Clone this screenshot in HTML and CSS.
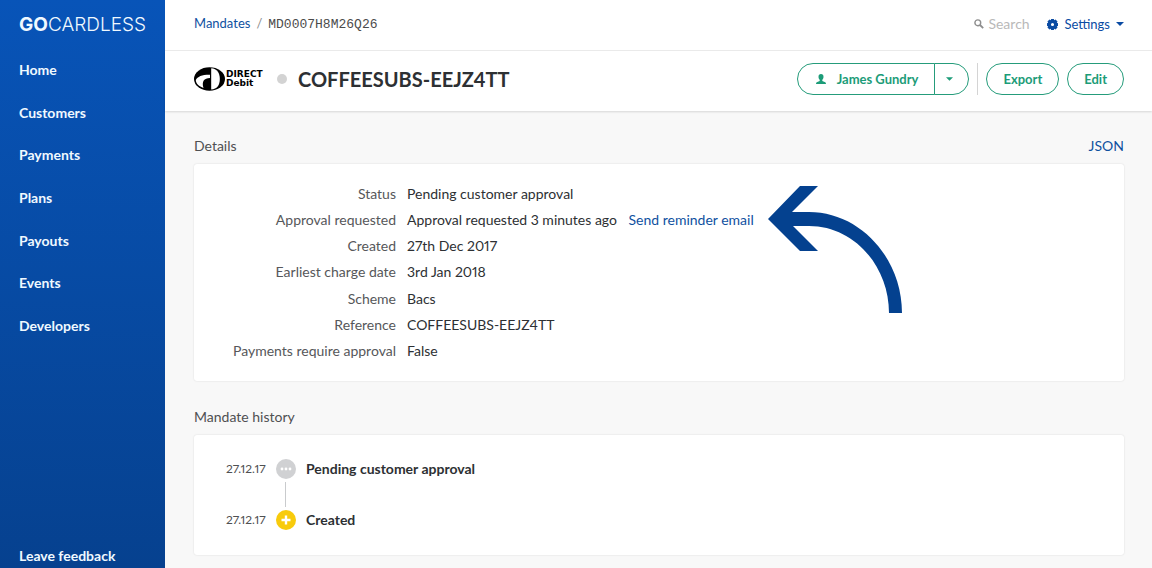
FILE: index.html
```html
<!DOCTYPE html>
<html lang="en">
<head>
<meta charset="utf-8">
<meta name="viewport" content="width=device-width, initial-scale=1">
<title>Mandate COFFEESUBS-EEJZ4TT</title>
<link rel="stylesheet" href="styles.css">
</head>
<body>
<div class="app">
  <aside class="sidebar">
    <a class="logo" href="#"><b>GO</b>CARDLESS</a>
    <nav class="nav">
      <a href="#">Home</a>
      <a href="#">Customers</a>
      <a href="#">Payments</a>
      <a href="#">Plans</a>
      <a href="#">Payouts</a>
      <a href="#">Events</a>
      <a href="#">Developers</a>
    </nav>
    <a class="feedback" href="#">Leave feedback</a>
  </aside>

  <div class="page">
    <header class="topbar">
      <div class="crumbs"><a href="#">Mandates</a><span class="slash">/</span><span class="mandate-id">MD0007H8M26Q26</span></div>
      <label class="search">
        <svg width="10" height="10" viewBox="0 0 10 10" aria-hidden="true"><circle cx="3.8" cy="3.8" r="2.9" fill="none" stroke="#8e8e8e" stroke-width="1.4"/><path d="M6 6l3.2 3.2" stroke="#8e8e8e" stroke-width="1.8"/></svg>
        <input type="search" placeholder="Search" aria-label="Search">
      </label>
      <button class="settings" type="button">
        <svg width="11" height="11" viewBox="0 0 12 12" aria-hidden="true"><path fill="#0a4ba3" fill-rule="evenodd" d="M4.5 0h3l.3 1.300L9.300.5l2.200 2.200-.8 1.500 1.300.3v3l-1.300.3.8 1.500-2.200 2.200-1.500-.8-.3 1.300h-3l-.3-1.300-1.500.8L.5 9.300l.8-1.500L0 7.500v-3l1.300-.3L.5 2.700 2.700.5l1.500.8zM6 4.300a1.700 1.700 0 1 0 0 3.400 1.700 1.700 0 0 0 0-3.400z"/></svg>
        <span>Settings</span>
        <svg class="caret" width="8" height="4" viewBox="0 0 8 4" aria-hidden="true"><path d="M0 0h8L4 4z" fill="currentColor"/></svg>
      </button>
    </header>

    <div class="titlebar">
      <div class="dd-logo">
        <svg width="31" height="24" viewBox="0 0 31 24" aria-hidden="true">
          <ellipse cx="15.500" cy="12" rx="15.500" ry="11.800" fill="#000"/>
          <path fill="#fff" d="M17.200 1.300C23 1.500 25.800 6 25.800 12S23 22.300 17.200 22.500z"/>
          <path fill="#fff" d="M1.800 13C3.500 9.500 8 7.600 16 7.700V11C10 11 7.500 14.500 9.500 21C5 19.500 1.800 16.500 1.800 13z"/>
        </svg>
        <div class="dd-text"><span>DIRECT</span><span>Debit</span></div>
      </div>
      <span class="status-dot"></span>
      <h1>COFFEESUBS-EEJZ4TT</h1>
      <div class="actions">
        <div class="split">
          <button type="button" class="who">
            <svg width="10" height="10" viewBox="0 0 10 10" aria-hidden="true"><path fill="currentColor" d="M5 0C6.600 0 7.500 1.100 7.500 2.700 7.500 4.100 7 5.100 6.300 5.700V7L9.300 8.200Q10 8.600 10 10H0Q0 8.600.7 8.200L3.700 7V5.700C3 5.100 2.500 4.100 2.500 2.700 2.500 1.100 3.400 0 5 0z"/></svg>
            <span>James Gundry</span>
          </button>
          <button type="button" class="more" aria-label="More customers"><svg width="7" height="4" viewBox="0 0 8 4" aria-hidden="true"><path d="M0 0h8L4 4z" fill="currentColor"/></svg></button>
        </div>
        <span class="divider"></span>
        <button type="button" class="pill">Export</button>
        <button type="button" class="pill">Edit</button>
      </div>
    </div>

    <main class="content">
      <section>
        <div class="section-head"><h2>Details</h2><a href="#">JSON</a></div>
        <div class="card details">
          <dl>
            <dt>Status</dt><dd>Pending customer approval</dd>
            <dt>Approval requested</dt><dd>Approval requested 3 minutes ago <a href="#">Send reminder email</a></dd>
            <dt>Created</dt><dd>27th Dec 2017</dd>
            <dt>Earliest charge date</dt><dd>3rd Jan 2018</dd>
            <dt>Scheme</dt><dd>Bacs</dd>
            <dt>Reference</dt><dd>COFFEESUBS-EEJZ4TT</dd>
            <dt>Payments require approval</dt><dd>False</dd>
          </dl>
          <svg class="arrow" width="135" height="127" viewBox="0 0 135 127" aria-hidden="true"><path fill="#04418f" d="M0 33L32 0H50L24 26H41C92 26 134 72 134 127H121C121 80 86 40 41 40H25L50 65H32z"/></svg>
        </div>
      </section>

      <section>
        <div class="section-head"><h2>Mandate history</h2></div>
        <ol class="card history">
          <li>
            <time>27.12.17</time>
            <svg width="20" height="20" viewBox="0 0 20 20" aria-hidden="true"><circle cx="10" cy="10" r="10" fill="#d0d1d3"/><g fill="#fff"><circle cx="6" cy="10" r="1.400"/><circle cx="10" cy="10" r="1.400"/><circle cx="14" cy="10" r="1.400"/></g></svg>
            <strong>Pending customer approval</strong>
          </li>
          <li class="link-line" aria-hidden="true"></li>
          <li>
            <time>27.12.17</time>
            <svg width="20" height="20" viewBox="0 0 20 20" aria-hidden="true"><circle cx="10" cy="10" r="10" fill="#f8cb0c"/><path d="M10 5.500v9M5.500 10h9" stroke="#fff" stroke-width="2.400"/></svg>
            <strong>Created</strong>
          </li>
        </ol>
      </section>
    </main>
  </div>
</div>
</body>
</html>
```
FILE: styles.css
```css
* { box-sizing: border-box; }
body {
  margin: 0;
  background: #f8f8f8;
  color: #2d3033;
  font: 14px/20px Lato, "Liberation Sans", sans-serif;
}
a { color: #0f519f; text-decoration: none; }
button { font: inherit; cursor: pointer; }
.app { display: flex; min-height: 100vh; }

.sidebar {
  display: flex;
  flex-direction: column;
  flex: 0 0 165px;
  padding: 15px 19px 2px;
  background: linear-gradient(#0854b8, #06418f);
}
.sidebar a { color: #f0f9ff; font-weight: 700; }
.sidebar .logo { font-family: Inter, sans-serif; font-size: 19px; font-weight: 300; }
.logo b { font-weight: 700; }
.nav {
  display: flex;
  flex-direction: column;
  justify-content: space-between;
  min-height: 276px;
  margin-top: 25px;
}
.feedback { margin-top: auto; }

.page { flex: 1; min-width: 0; }
.topbar {
  display: flex;
  align-items: center;
  height: 51px;
  padding: 0 28px 2px 29px;
  background: #fff;
  border-bottom: 1px solid #ececec;
}
.crumbs { display: flex; align-items: baseline; margin-right: auto; font-size: 13px; }
.slash { margin: 0 6px; color: #8b8b8b; }
.mandate-id { font-family: "Liberation Mono", monospace; color: #4b4b4b; }
.search { display: flex; align-items: center; gap: 4px; }
.search input {
  width: 59px;
  padding: 0;
  border: 0;
  background: none;
  font: inherit;
}
.search input::placeholder { color: #b9b9b9; opacity: 1; }
.settings {
  display: flex;
  align-items: center;
  gap: 6px;
  padding: 0;
  border: 0;
  background: none;
  color: #0a4ba3;
  font-size: 13px;
}

.titlebar {
  display: flex;
  align-items: center;
  height: 60px;
  padding: 0 28px 4px 29px;
  background: #fff;
  box-shadow: 0 1px 2px #00000022;
}
.dd-logo { display: flex; align-items: center; gap: 1px; width: 71px; }
.dd-text {
  display: grid;
  color: #000;
  font: 700 9px/9px "DejaVu Sans", sans-serif;
}
.status-dot {
  width: 10px;
  height: 10px;
  margin: 0 11px 0 12px;
  border-radius: 50%;
  background: #d3d3d3;
}
h1 { margin: 0; font-size: 20px; line-height: 28px; font-weight: 700; }
.actions { display: flex; align-items: center; gap: 8px; margin-left: auto; }
.actions button {
  height: 32px;
  border: 1px solid #259c7b;
  background: #fff;
  color: #1c9c78;
  font-size: 13px;
  font-weight: 700;
}
.split { display: flex; }
.actions .who {
  display: flex;
  align-items: center;
  gap: 11px;
  padding: 0 16px 0 18px;
  border-radius: 16px 0 0 16px;
}
.actions .more {
  display: flex;
  align-items: center;
  width: 35px;
  padding: 0 11px;
  margin-left: -1px;
  border-radius: 0 16px 16px 0;
}
.divider { width: 1px; height: 32px; background: #d4d4d4; }
.actions .pill { padding: 0 16px; border-radius: 16px; }

.content { padding: 25px 28px 12px 29px; font-variant-numeric: proportional-nums; }
.section-head { display: flex; justify-content: space-between; margin-bottom: 8px; }
h2 { margin: 0; font-size: 14px; line-height: 20px; font-weight: 400; color: #4f5052; }
.card {
  background: #fff;
  border-radius: 3px;
  box-shadow: 0 0 2px #00000022;
}
.details { position: relative; margin-bottom: 26px; padding: 20px 0; }
dl {
  display: grid;
  grid-template-columns: 202px 1fr;
  column-gap: 11px;
  align-content: space-between;
  min-height: 177px;
  margin: 0;
}
dt { text-align: right; color: #56575a; }
dd { margin: 0; }
dd a { margin-left: 8px; }
.arrow { position: absolute; left: 574px; top: 22px; }

.history { margin: 0; padding: 24px 32px 25px; list-style: none; }
.history li { display: flex; align-items: center; gap: 10px; min-height: 20px; }
.history time { width: 40px; font-size: 12px; color: #4f5052; }
.history .link-line {
  width: 1px;
  height: 25px;
  min-height: 0;
  margin: 3px 0 3px 59px;
  background: #c9cbcd;
}
```
